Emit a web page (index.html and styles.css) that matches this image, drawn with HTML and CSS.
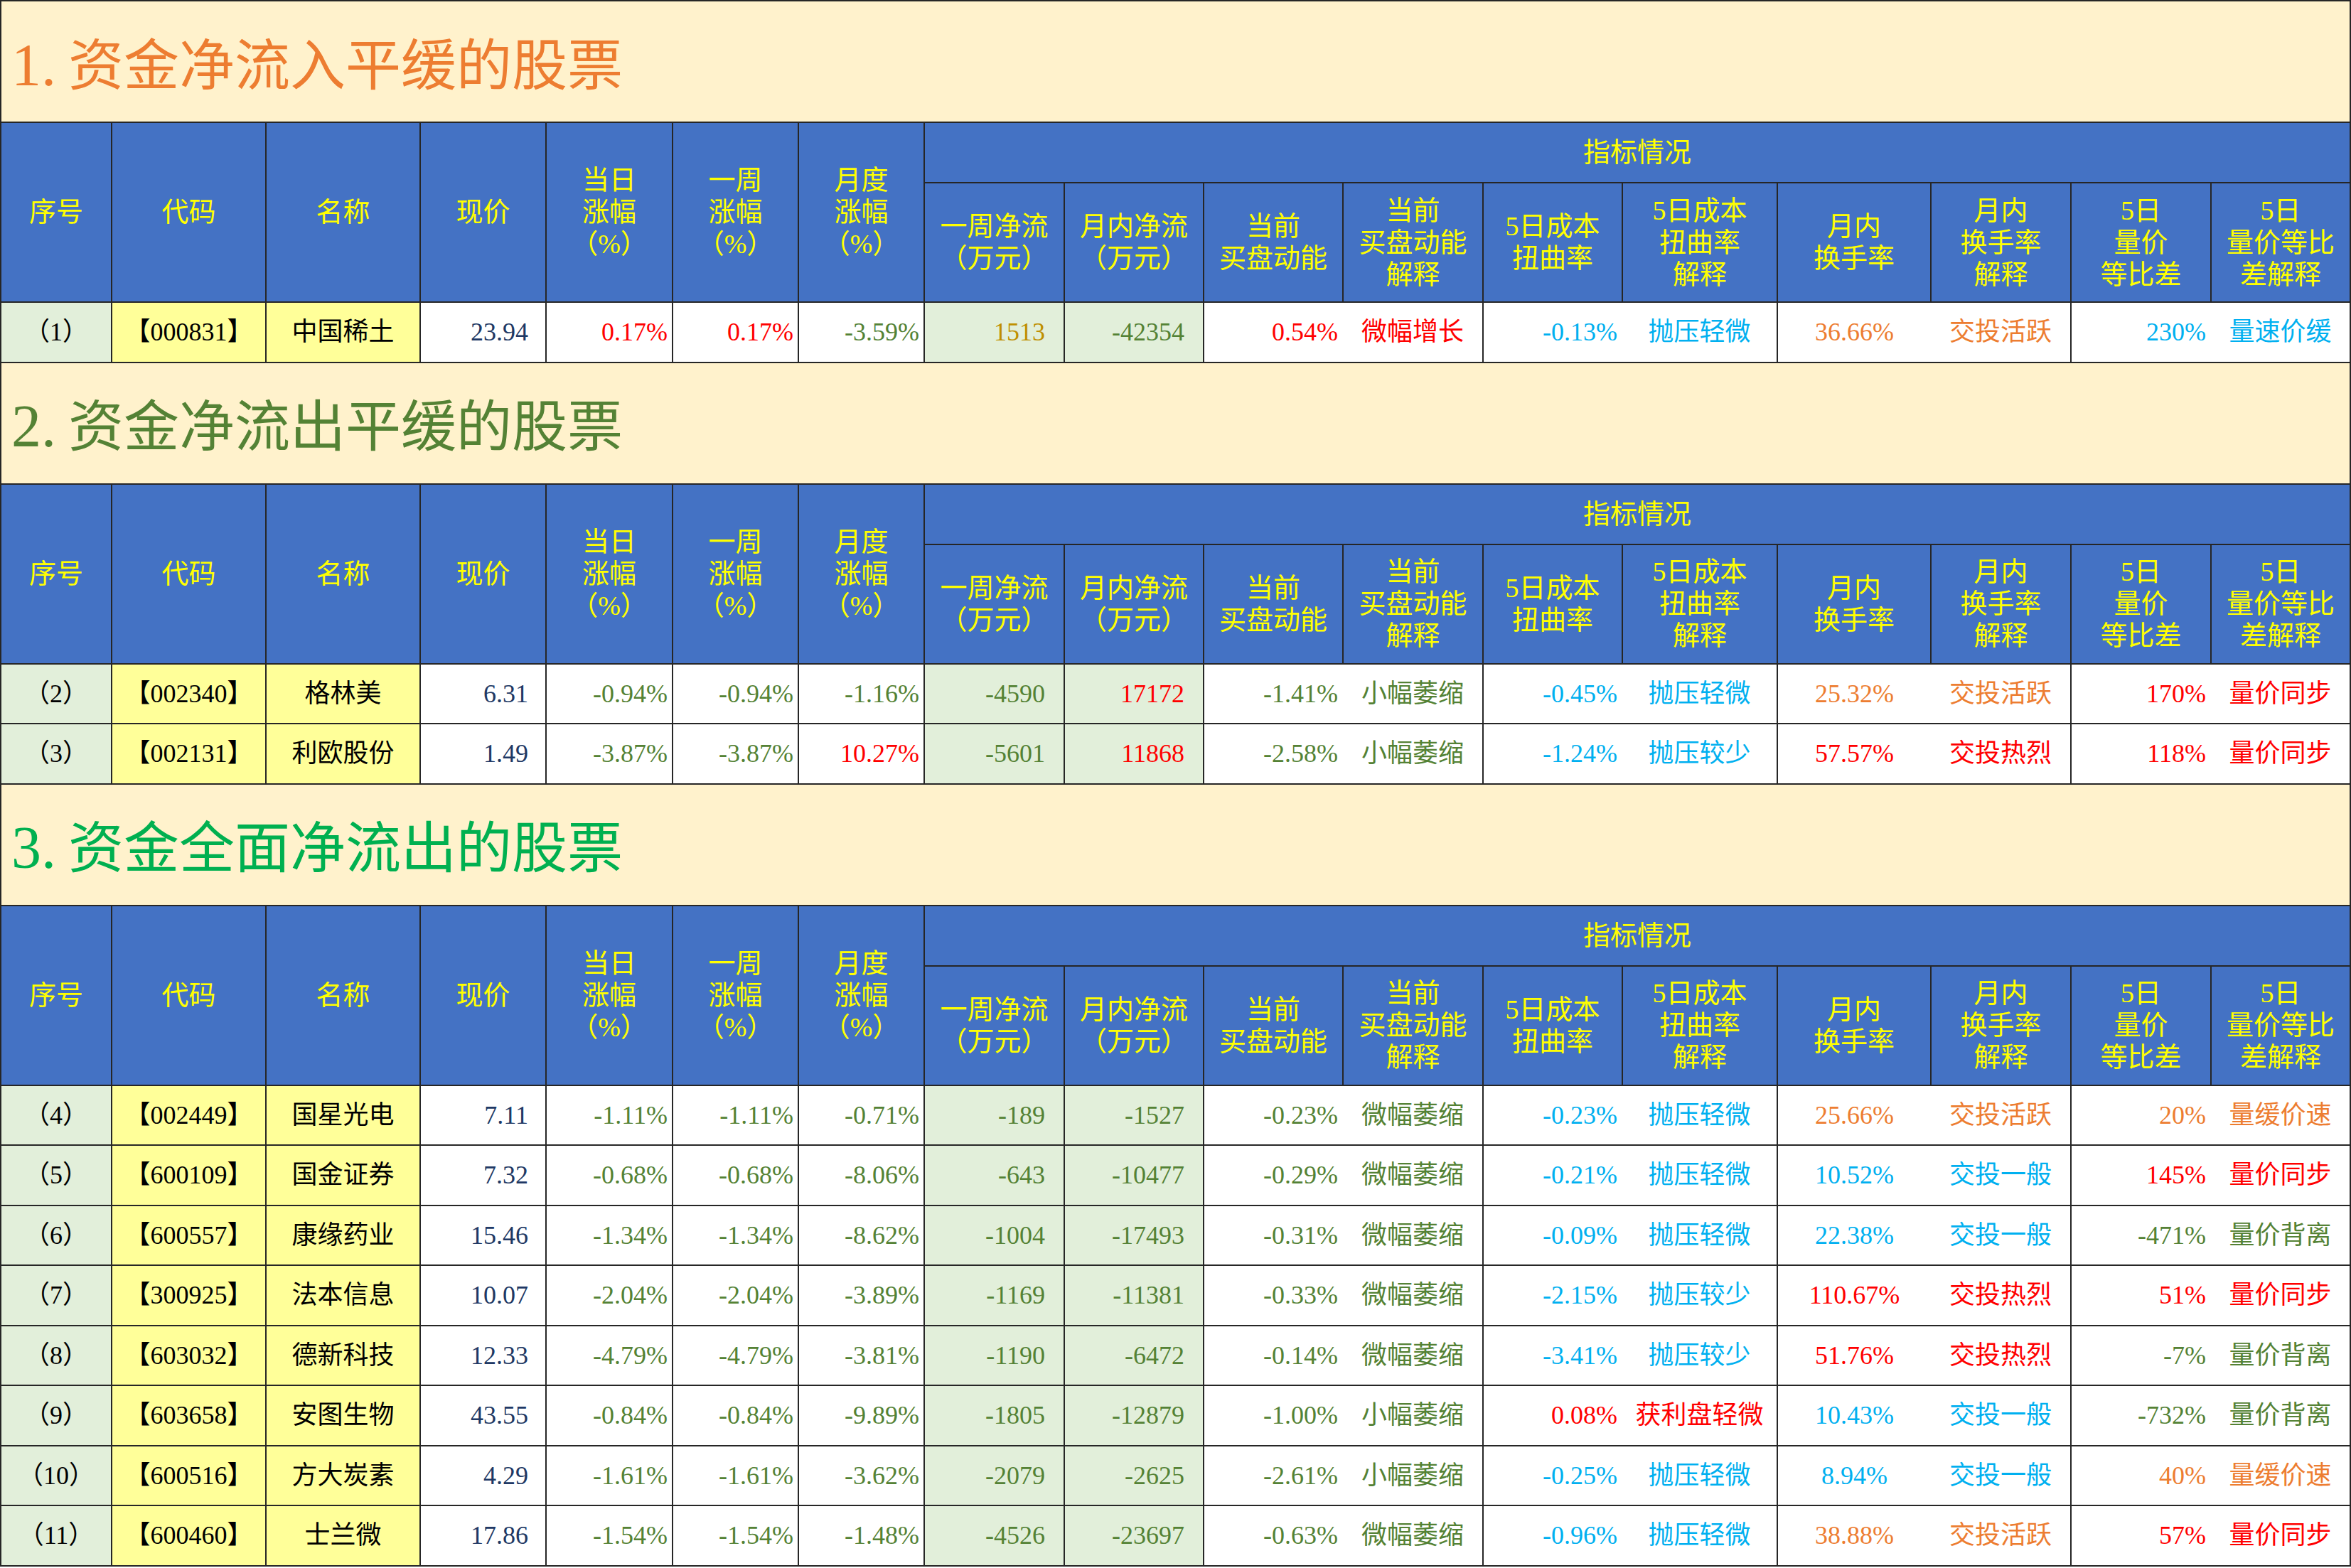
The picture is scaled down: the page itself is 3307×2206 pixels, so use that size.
FILE: index.html
```html
<!DOCTYPE html>
<html lang="zh-CN">
<head>
<meta charset="utf-8">
<title>资金流向股票</title>
<link rel="stylesheet" href="styles.css">
</head>
<body>
<table class="sheet">
  <colgroup>
    <col class="w156"><col class="w217"><col class="w217"><col class="w177"><col class="w178"><col class="w177"><col class="w177">
    <col class="w197"><col class="w196"><col class="w196"><col class="w197"><col class="w196"><col class="w218"><col class="w216"><col class="w197"><col class="w197"><col class="w196">
  </colgroup>
  <tbody>
    <tr class="title-row"><td colspan="17" class="title t-orange"><span class="no">1.</span>资金净流入平缓的股票</td></tr>
    <tr class="hd-top">
      <th rowspan="2">序号</th><th rowspan="2">代码</th><th rowspan="2">名称</th><th rowspan="2">现价</th>
      <th rowspan="2">当日<br>涨幅<br>（%）</th><th rowspan="2">一周<br>涨幅<br>（%）</th><th rowspan="2">月度<br>涨幅<br>（%）</th>
      <th colspan="10">指标情况</th>
    </tr>
    <tr class="hd-bot">
      <th>一周净流<br>（万元）</th><th>月内净流<br>（万元）</th><th>当前<br>买盘动能</th><th>当前<br>买盘动能<br>解释</th>
      <th>5日成本<br>扭曲率</th><th>5日成本<br>扭曲率<br>解释</th><th>月内<br>换手率</th><th>月内<br>换手率<br>解释</th>
      <th>5日<br>量价<br>等比差</th><th>5日<br>量价等比<br>差解释</th>
    </tr>
    <tr class="row">
      <td class="idx">（1）</td><td class="code">【000831】</td><td class="name">中国稀土</td><td class="price">23.94</td>
      <td class="pct red">0.17%</td><td class="pct red">0.17%</td><td class="pct grn">-3.59%</td>
      <td class="flow gold">1513</td><td class="flow grn">-42354</td>
      <td class="num red">0.54%</td><td class="txt red">微幅增长</td>
      <td class="num cyan">-0.13%</td><td class="txt cyan">抛压轻微</td>
      <td class="mid org">36.66%</td><td class="txt org">交投活跃</td>
      <td class="num cyan">230%</td><td class="txt cyan">量速价缓</td>
    </tr>

    <tr class="title-row"><td colspan="17" class="title t-olive"><span class="no">2.</span>资金净流出平缓的股票</td></tr>
    <tr class="hd-top">
      <th rowspan="2">序号</th><th rowspan="2">代码</th><th rowspan="2">名称</th><th rowspan="2">现价</th>
      <th rowspan="2">当日<br>涨幅<br>（%）</th><th rowspan="2">一周<br>涨幅<br>（%）</th><th rowspan="2">月度<br>涨幅<br>（%）</th>
      <th colspan="10">指标情况</th>
    </tr>
    <tr class="hd-bot">
      <th>一周净流<br>（万元）</th><th>月内净流<br>（万元）</th><th>当前<br>买盘动能</th><th>当前<br>买盘动能<br>解释</th>
      <th>5日成本<br>扭曲率</th><th>5日成本<br>扭曲率<br>解释</th><th>月内<br>换手率</th><th>月内<br>换手率<br>解释</th>
      <th>5日<br>量价<br>等比差</th><th>5日<br>量价等比<br>差解释</th>
    </tr>
    <tr class="row">
      <td class="idx">（2）</td><td class="code">【002340】</td><td class="name">格林美</td><td class="price">6.31</td>
      <td class="pct grn">-0.94%</td><td class="pct grn">-0.94%</td><td class="pct grn">-1.16%</td>
      <td class="flow grn">-4590</td><td class="flow red">17172</td>
      <td class="num grn">-1.41%</td><td class="txt grn">小幅萎缩</td>
      <td class="num cyan">-0.45%</td><td class="txt cyan">抛压轻微</td>
      <td class="mid org">25.32%</td><td class="txt org">交投活跃</td>
      <td class="num red">170%</td><td class="txt red">量价同步</td>
    </tr>
    <tr class="row">
      <td class="idx">（3）</td><td class="code">【002131】</td><td class="name">利欧股份</td><td class="price">1.49</td>
      <td class="pct grn">-3.87%</td><td class="pct grn">-3.87%</td><td class="pct red">10.27%</td>
      <td class="flow grn">-5601</td><td class="flow red">11868</td>
      <td class="num grn">-2.58%</td><td class="txt grn">小幅萎缩</td>
      <td class="num cyan">-1.24%</td><td class="txt cyan">抛压较少</td>
      <td class="mid red">57.57%</td><td class="txt red">交投热烈</td>
      <td class="num red">118%</td><td class="txt red">量价同步</td>
    </tr>

    <tr class="title-row"><td colspan="17" class="title t-green"><span class="no">3.</span>资金全面净流出的股票</td></tr>
    <tr class="hd-top">
      <th rowspan="2">序号</th><th rowspan="2">代码</th><th rowspan="2">名称</th><th rowspan="2">现价</th>
      <th rowspan="2">当日<br>涨幅<br>（%）</th><th rowspan="2">一周<br>涨幅<br>（%）</th><th rowspan="2">月度<br>涨幅<br>（%）</th>
      <th colspan="10">指标情况</th>
    </tr>
    <tr class="hd-bot">
      <th>一周净流<br>（万元）</th><th>月内净流<br>（万元）</th><th>当前<br>买盘动能</th><th>当前<br>买盘动能<br>解释</th>
      <th>5日成本<br>扭曲率</th><th>5日成本<br>扭曲率<br>解释</th><th>月内<br>换手率</th><th>月内<br>换手率<br>解释</th>
      <th>5日<br>量价<br>等比差</th><th>5日<br>量价等比<br>差解释</th>
    </tr>
    <tr class="row">
      <td class="idx">（4）</td><td class="code">【002449】</td><td class="name">国星光电</td><td class="price">7.11</td>
      <td class="pct grn">-1.11%</td><td class="pct grn">-1.11%</td><td class="pct grn">-0.71%</td>
      <td class="flow grn">-189</td><td class="flow grn">-1527</td>
      <td class="num grn">-0.23%</td><td class="txt grn">微幅萎缩</td>
      <td class="num cyan">-0.23%</td><td class="txt cyan">抛压轻微</td>
      <td class="mid org">25.66%</td><td class="txt org">交投活跃</td>
      <td class="num org">20%</td><td class="txt org">量缓价速</td>
    </tr>
    <tr class="row">
      <td class="idx">（5）</td><td class="code">【600109】</td><td class="name">国金证券</td><td class="price">7.32</td>
      <td class="pct grn">-0.68%</td><td class="pct grn">-0.68%</td><td class="pct grn">-8.06%</td>
      <td class="flow grn">-643</td><td class="flow grn">-10477</td>
      <td class="num grn">-0.29%</td><td class="txt grn">微幅萎缩</td>
      <td class="num cyan">-0.21%</td><td class="txt cyan">抛压轻微</td>
      <td class="mid cyan">10.52%</td><td class="txt cyan">交投一般</td>
      <td class="num red">145%</td><td class="txt red">量价同步</td>
    </tr>
    <tr class="row">
      <td class="idx">（6）</td><td class="code">【600557】</td><td class="name">康缘药业</td><td class="price">15.46</td>
      <td class="pct grn">-1.34%</td><td class="pct grn">-1.34%</td><td class="pct grn">-8.62%</td>
      <td class="flow grn">-1004</td><td class="flow grn">-17493</td>
      <td class="num grn">-0.31%</td><td class="txt grn">微幅萎缩</td>
      <td class="num cyan">-0.09%</td><td class="txt cyan">抛压轻微</td>
      <td class="mid cyan">22.38%</td><td class="txt cyan">交投一般</td>
      <td class="num grn">-471%</td><td class="txt grn">量价背离</td>
    </tr>
    <tr class="row">
      <td class="idx">（7）</td><td class="code">【300925】</td><td class="name">法本信息</td><td class="price">10.07</td>
      <td class="pct grn">-2.04%</td><td class="pct grn">-2.04%</td><td class="pct grn">-3.89%</td>
      <td class="flow grn">-1169</td><td class="flow grn">-11381</td>
      <td class="num grn">-0.33%</td><td class="txt grn">微幅萎缩</td>
      <td class="num cyan">-2.15%</td><td class="txt cyan">抛压较少</td>
      <td class="mid red">110.67%</td><td class="txt red">交投热烈</td>
      <td class="num red">51%</td><td class="txt red">量价同步</td>
    </tr>
    <tr class="row">
      <td class="idx">（8）</td><td class="code">【603032】</td><td class="name">德新科技</td><td class="price">12.33</td>
      <td class="pct grn">-4.79%</td><td class="pct grn">-4.79%</td><td class="pct grn">-3.81%</td>
      <td class="flow grn">-1190</td><td class="flow grn">-6472</td>
      <td class="num grn">-0.14%</td><td class="txt grn">微幅萎缩</td>
      <td class="num cyan">-3.41%</td><td class="txt cyan">抛压较少</td>
      <td class="mid red">51.76%</td><td class="txt red">交投热烈</td>
      <td class="num grn">-7%</td><td class="txt grn">量价背离</td>
    </tr>
    <tr class="row">
      <td class="idx">（9）</td><td class="code">【603658】</td><td class="name">安图生物</td><td class="price">43.55</td>
      <td class="pct grn">-0.84%</td><td class="pct grn">-0.84%</td><td class="pct grn">-9.89%</td>
      <td class="flow grn">-1805</td><td class="flow grn">-12879</td>
      <td class="num grn">-1.00%</td><td class="txt grn">小幅萎缩</td>
      <td class="num red">0.08%</td><td class="txt red">获利盘轻微</td>
      <td class="mid cyan">10.43%</td><td class="txt cyan">交投一般</td>
      <td class="num grn">-732%</td><td class="txt grn">量价背离</td>
    </tr>
    <tr class="row">
      <td class="idx">（10）</td><td class="code">【600516】</td><td class="name">方大炭素</td><td class="price">4.29</td>
      <td class="pct grn">-1.61%</td><td class="pct grn">-1.61%</td><td class="pct grn">-3.62%</td>
      <td class="flow grn">-2079</td><td class="flow grn">-2625</td>
      <td class="num grn">-2.61%</td><td class="txt grn">小幅萎缩</td>
      <td class="num cyan">-0.25%</td><td class="txt cyan">抛压轻微</td>
      <td class="mid cyan">8.94%</td><td class="txt cyan">交投一般</td>
      <td class="num org">40%</td><td class="txt org">量缓价速</td>
    </tr>
    <tr class="row">
      <td class="idx">（11）</td><td class="code">【600460】</td><td class="name">士兰微</td><td class="price">17.86</td>
      <td class="pct grn">-1.54%</td><td class="pct grn">-1.54%</td><td class="pct grn">-1.48%</td>
      <td class="flow grn">-4526</td><td class="flow grn">-23697</td>
      <td class="num grn">-0.63%</td><td class="txt grn">微幅萎缩</td>
      <td class="num cyan">-0.96%</td><td class="txt cyan">抛压轻微</td>
      <td class="mid org">38.88%</td><td class="txt org">交投活跃</td>
      <td class="num red">57%</td><td class="txt red">量价同步</td>
    </tr>
  </tbody>
</table>
</body>
</html>
```
FILE: styles.css
```css
html, body {
  margin: 0;
  padding: 0;
  background: #ffffff;
}

body {
  font-family: "Liberation Serif", "Noto Sans CJK SC", serif;
  color: #000000;
}

.sheet {
  width: 3306px;
  table-layout: fixed;
  border-collapse: collapse;
  margin: 0;
}

.w156 { width: 156px; }
.w177 { width: 177px; }
.w178 { width: 178px; }
.w196 { width: 196px; }
.w197 { width: 197px; }
.w216 { width: 216px; }
.w217 { width: 217px; }
.w218 { width: 218px; }

.sheet td,
.sheet th {
  border: 2px solid #262626;
  padding: 0;
  overflow: hidden;
  white-space: nowrap;
}

/* Section titles */
.title-row {
  height: 171px;
}

.sheet .title {
  background: #fff2cc;
  font-size: 78px;
  line-height: 90px;
  text-align: left;
  vertical-align: middle;
  padding: 12px 0 0 14px;
}

.title .no {
  display: inline-block;
  width: 80px;
  font-size: 84px;
}

.t-orange { color: #ed7d31; }
.t-olive { color: #548235; }
.t-green { color: #00b050; }

/* Header */
.sheet th {
  background: #4472c4;
  color: #ffff00;
  font-size: 38px;
  line-height: 45px;
  font-weight: normal;
  text-align: center;
  vertical-align: middle;
}

.hd-top {
  height: 85px;
}

.hd-bot {
  height: 168px;
}

/* Data rows */
.row {
  height: 84.5px;
}

.sheet .row td {
  font-size: 36px;
  line-height: 40px;
  vertical-align: middle;
  background: #ffffff;
}

.sheet .row .idx {
  background: #e2efda;
  text-align: center;
}

.sheet .row .code,
.sheet .row .name {
  background: #ffff99;
  text-align: center;
}

.sheet .row .price {
  text-align: right;
  padding-right: 24px;
  color: #203864;
}

.sheet .row .pct {
  text-align: right;
  padding-right: 6px;
}

.sheet .row .flow {
  background: #e2efda;
  text-align: right;
  padding-right: 26px;
}

.sheet .row .num {
  text-align: right;
  padding-right: 7px;
  border-right-style: hidden;
}

.sheet .row .mid {
  text-align: center;
  border-right-style: hidden;
}

.sheet .row .txt {
  text-align: center;
}

/* Value colours */
.red { color: #ff0000; }
.grn { color: #548235; }
.gold { color: #bf8f00; }
.cyan { color: #00b0f0; }
.org { color: #ed7d31; }
```
